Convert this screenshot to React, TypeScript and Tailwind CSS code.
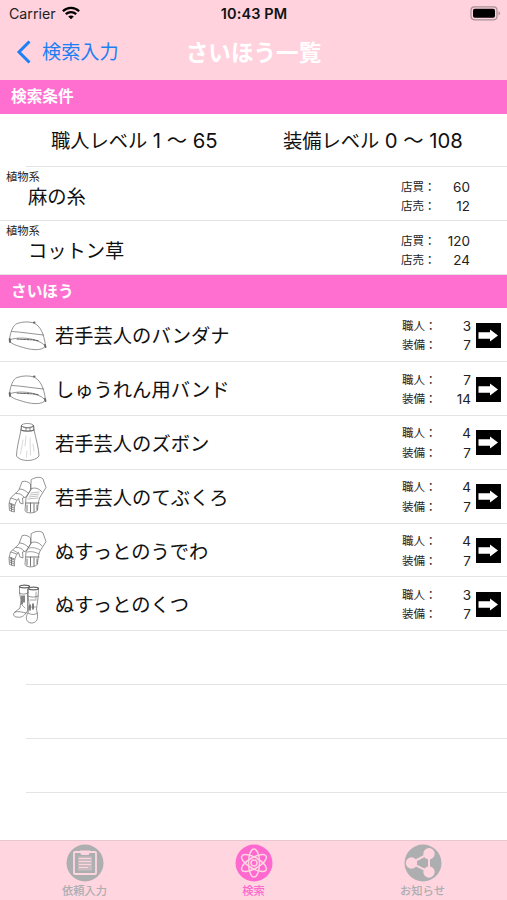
import type { ReactNode } from "react";

type Stat = { label: string; value: number };
type GearKind = "cap" | "skirt" | "gloves" | "bracers" | "boots";

const materials = [
  { category: "植物系", name: "麻の糸", buy: 60, sell: 12 },
  { category: "植物系", name: "コットン草", buy: 120, sell: 24 },
];

const items: { name: string; kind: GearKind; craft: number; equip: number }[] = [
  { name: "若手芸人のバンダナ", kind: "cap", craft: 3, equip: 7 },
  { name: "しゅうれん用バンド", kind: "cap", craft: 7, equip: 14 },
  { name: "若手芸人のズボン", kind: "skirt", craft: 4, equip: 7 },
  { name: "若手芸人のてぶくろ", kind: "gloves", craft: 4, equip: 7 },
  { name: "ぬすっとのうでわ", kind: "bracers", craft: 4, equip: 7 },
  { name: "ぬすっとのくつ", kind: "boots", craft: 3, equip: 7 },
];

function Cap() {
  return (
    <>
      <path d="M1.500 25C2 18 5 10 9 8.500C15 6.500 21 6.500 26 8C32 11 36 18 37.500 31" />
      <path d="M4 16.500C14 17 25 19 35.500 20" />
      <path d="M1.500 25C8 21.500 29 22 37.500 31C34 36.500 22 35 12 31.500C7 30 2 28.500 1.500 25Z" />
      <path d="M9 24C17 25 24 24 31 26" strokeDasharray="2 1.200" strokeWidth="1.100" />
      <path d="M26 7.500H26.500M1.700 24L2 27M37 30L37.500 32" strokeWidth="1.900" />
    </>
  );
}

function Skirt() {
  return (
    <>
      <ellipse cx="19.500" cy="3.500" rx="6" ry="2" />
      <path d="M13.500 3.500L13 8C16 9.500 23 9.500 26 8L25.500 3.500" strokeWidth="1.100" />
      <path d="M15 5C17 6.500 22 6.500 24.500 5M18 6V8.500M22 6V8.500" />
      <path d="M13 8C11 18 8.500 27 8.500 34C12 40 27 40 31 34C31 27 28 17 26 8" />
      <path d="M15 18L12.500 32M18 14L17 24M22 16L22.500 33M25 22L26 29M19 29L18.500 35" strokeWidth=".25" />
    </>
  );
}

function Gloves({ striped }: { striped: boolean }) {
  return (
    <>
      <path d="M23.500 3.500C27 1 33 .5 35 3L38 11.500L31.500 22C30.500 25 30 29 29.500 34C28 37.500 18 38 17 34.500L18 22L22.500 14Z" />
      <path d="M22.500 13C26 11 31 12 34 16" />
      <path d="M14.500 5.500C17 4.500 21 6 22.500 8L23 13.500L18 21L14.500 22L15 28L12 27L10.500 22.500C7 26 6 31 6.500 36L1.500 34.500L1 28L2.500 22L10.500 14.500Z" />
      <path d="M12 13C15 13 18 15 20 17M8 17.500C12 17 14 19 16 21M3 22L8.500 24M1.500 27L6.500 29" />
      <path d="M18 27H31M19 29V35M22.500 27V36M26 28V36M29 29V34" strokeWidth=".9" />
      <path d="M2 28L6 30M2 30L6 32M2 32L6 34M3.500 28V35" strokeWidth=".8" />
      {striped ? (
        <path d="M23 17L31 16M22 19L31 18M21 21L30 20M20 23L30 22" strokeWidth=".4" />
      ) : (
        <path d="M21 18C25 17 29 18 32 20M19 22C23 21 28 22 31 24M5 20L10 23" strokeWidth=".6" />
      )}
    </>
  );
}

function Boots() {
  return (
    <>
      <ellipse cx="16.500" cy="2.500" rx="5" ry="1.300" strokeWidth="1.300" />
      <ellipse cx="25.500" cy="4.500" rx="5" ry="1.300" strokeWidth="1.300" />
      <path d="M11.500 3V9L13 16L12 24L7 28C4.500 30 5.500 33 9 33C13 34 16 32 18 29L19.500 27V5" />
      <path d="M20.500 5L20 11L21 20L20 29C17 33 18 38.500 23 39C28 39 30 36 29.500 31L28.500 25L30 14L30.500 5" />
      <path d="M11.500 9C14 10.500 17 10.500 20 9M20 12C23 13.500 27 13.500 30 12M7 28C10 27 14 28 18 29M20 29C23 31 27 31 29.500 29" />
      <path d="M14 12V20M16 12V18M22 21V26M25 20V25" strokeWidth="1.600" />
      <path d="M14 21L17 24M22 16H28M21 23H28M28 8V15" strokeWidth=".6" />
    </>
  );
}

function GearIcon({ kind }: { kind: GearKind }) {
  return (
    <svg viewBox="0 0 40 40" className="mb-[3px] ml-2 h-10 w-10 shrink-0" fill="none" stroke="#666" strokeWidth=".7" strokeLinecap="round" strokeLinejoin="round">
      {kind === "cap" && <Cap />}
      {kind === "skirt" && <Skirt />}
      {(kind === "gloves" || kind === "bracers") && <Gloves striped={kind === "gloves"} />}
      {kind === "boots" && <Boots />}
    </svg>
  );
}

function SectionHeader({ title }: { title: string }) {
  return (
    <h2 className="flex h-[33.500px] shrink-0 items-center bg-[#ff6fd0] pt-px pl-[11px] text-[15.700px] font-bold text-white">
      {title}
    </h2>
  );
}

function Stats({ rows }: { rows: Stat[] }) {
  return (
    <dl className="w-[69px] shrink-0 text-[#222]">
      {rows.map((row) => (
        <div key={row.label} className="flex h-[19.600px] items-center justify-between">
          <dt className="text-[11.500px] leading-none">{row.label}：</dt>
          <dd className="text-[13.500px] leading-none">{row.value}</dd>
        </div>
      ))}
    </dl>
  );
}

function Tab({ label, active, children }: { label: string; active?: boolean; children: ReactNode }) {
  return (
    <button className={`flex flex-1 flex-col items-center pt-[3px] ${active ? "text-[#ff69cf]" : "text-[#acaeaf]"}`}>
      <svg viewBox="0 0 38 38" className="h-[38px] w-[38px]" fill="none" stroke="#ffd5e0">
        <circle cx="19" cy="19" r="18.500" fill="currentColor" stroke="none" />
        {children}
      </svg>
      <span className="mt-px text-[11.300px] leading-4 font-medium">{label}</span>
    </button>
  );
}

export default function App() {
  return (
    <div className="flex h-[900px] w-[507px] flex-col overflow-hidden bg-white font-[Inter,'Noto_Sans_CJK_JP',sans-serif] text-[#111]">
      <header className="h-20 shrink-0 bg-[#ffd2de]">
        {/* Status bar */}
        <div className="grid h-[27px] grid-cols-3 items-center pr-[6px] pl-[7px] text-[14px]">
          <div className="flex items-center gap-[6px] pl-[2px]">
            <span className="text-[14.200px] text-[#222]">Carrier</span>
            <svg viewBox="0 0 18 14" className="h-[14px] w-[18px]" fill="none" stroke="#000" strokeWidth="2.300">
              <path d="M.9 5.200C5.500.7 12.500.7 17.100 5.200M3.800 8.200C6.800 5.300 11.200 5.300 14.200 8.200" />
              <path d="M6.200 10.500C7.800 9 10.200 9 11.800 10.500L9 13.300Z" fill="#000" stroke="none" />
            </svg>
          </div>
          <span className="pt-px text-center text-[14.500px] font-semibold tracking-[0.1px] whitespace-nowrap">10:43 PM</span>
          <svg viewBox="0 0 31 15" className="h-[15px] w-[31px] justify-self-end">
            <rect x="1" y=".8" width="26" height="13" rx="3.500" fill="none" stroke="#a78e95" strokeWidth="1.200" />
            <rect x="3" y="2.800" width="22" height="9" rx="1.800" fill="#000" />
            <path d="M28.500 5.200C30.500 6 30.500 8.600 28.500 9.400Z" fill="#a78e95" />
          </svg>
        </div>
        {/* Navigation bar */}
        <div className="grid h-[51px] grid-cols-[1fr_auto_1fr] items-center">
          <button className="flex items-center gap-[11px] pl-4 text-[19.200px] text-[#1c80f5]">
            <svg viewBox="0 0 15 24" className="h-6 w-[15px]" fill="none" stroke="currentColor" strokeWidth="3">
              <path d="M13.500 1.500L3 12L13.500 22.500" />
            </svg>
            検索入力
          </button>
          <h1 className="pt-px text-[22.600px] font-bold text-white">さいほう一覧</h1>
        </div>
      </header>

      <main className="flex min-h-0 flex-1 flex-col">
        <SectionHeader title="検索条件" />
        <div className="ml-[26px] flex h-[53.800px] shrink-0 items-center border-b border-[#e4e4e4] pt-[3px] text-[19.300px]">
          <span className="w-[231px] pl-[25px] whitespace-nowrap">
            職人レベル <span className="text-[20.300px]">1 〜 65</span>
          </span>
          <span className="pl-[26px] whitespace-nowrap">
            装備レベル <span className="text-[20.300px]">0 〜 108</span>
          </span>
        </div>
        {materials.map((m) => (
          <div key={m.name} className="flex h-[53.800px] shrink-0 justify-between border-b border-[#e4e4e4] pr-[37px]">
            <div>
              <p className="pt-[3px] pl-[6px] text-[11.300px] leading-[14px] text-[#222]">{m.category}</p>
              <p className="pl-7 text-[19.300px] leading-[27px]">{m.name}</p>
            </div>
            <div className="pt-[10.500px]">
              <Stats rows={[{ label: "店買", value: m.buy }, { label: "店売", value: m.sell }]} />
            </div>
          </div>
        ))}

        <SectionHeader title="さいほう" />
        {items.map((item) => (
          <div key={item.name} className="flex h-[53.800px] shrink-0 items-center border-b border-[#e4e4e4] pt-[3px] pr-[6px]">
            <GearIcon kind={item.kind} />
            <span className="flex-1 pt-px pl-[7px] text-[19.300px]">{item.name}</span>
            <Stats rows={[{ label: "職人", value: item.craft }, { label: "装備", value: item.equip }]} />
            <svg viewBox="0 0 25 25" className="mb-[2px] ml-[5px] h-[25px] w-[25px]">
              <path d="M0 0H25V25H0Z" fill="#000" />
              <path d="M2.500 9.300H14V6.500L22 12.500L14 18.500V15.700H2.500Z" fill="#fff" />
            </svg>
          </div>
        ))}
        {[0, 1, 2].map((n) => (
          <div key={n} className="ml-[26px] h-[53.900px] shrink-0 border-b border-[#e4e4e4]" />
        ))}
      </main>

      <nav className="flex h-[60.500px] shrink-0 border-t border-[#e6c6d0] bg-[#ffd5e0]">
        <Tab label="依頼入力">
          <rect x="8" y="8" width="22" height="22" rx="1" strokeWidth="1.800" />
          <path d="M14 7H24L22.500 10.500H15.500Z" fill="#ffd5e0" />
          <rect x="12" y="12.500" width="14" height="14" fill="#ffd5e0" fillOpacity=".35" stroke="none" />
          <path d="M13 14.500H25M13 17.500H25M13 20.500H25M13 23.500H22" strokeWidth="1.100" />
        </Tab>
        <Tab label="検索" active>
          <g strokeWidth="1.500">
            <ellipse cx="19" cy="19" rx="5.500" ry="14" />
            <ellipse cx="19" cy="19" rx="5.500" ry="14" transform="rotate(60 19 19)" />
            <ellipse cx="19" cy="19" rx="5.500" ry="14" transform="rotate(120 19 19)" />
            <circle cx="19" cy="19" r="3" />
          </g>
        </Tab>
        <Tab label="お知らせ">
          <path d="M7 19L25 9.500V28Z" strokeWidth="2" />
          <g fill="#ffd5e0" stroke="none">
            <circle cx="7.500" cy="19" r="5.700" />
            <circle cx="25" cy="9.700" r="5.700" />
            <circle cx="25" cy="28" r="5.700" />
          </g>
        </Tab>
      </nav>
    </div>
  );
}
